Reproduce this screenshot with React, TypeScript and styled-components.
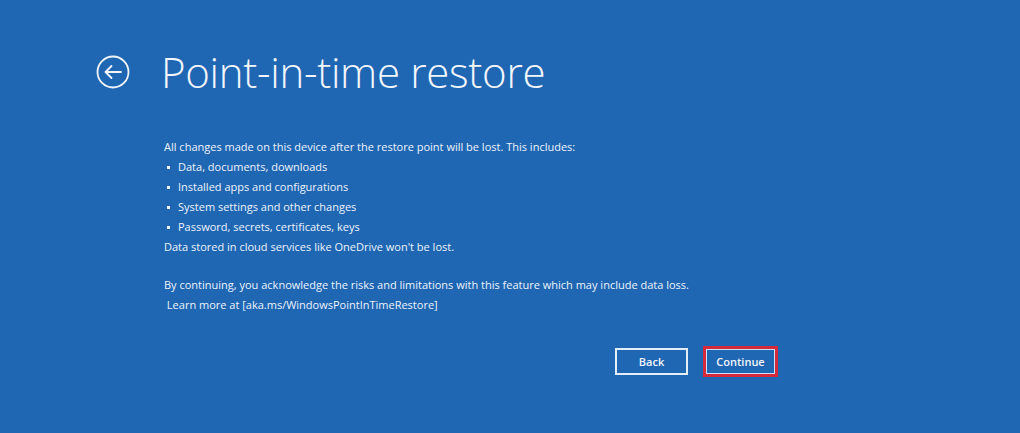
import React from "react";
import styled, { createGlobalStyle } from "styled-components";

const Global = createGlobalStyle`
  html, body { margin: 0; padding: 0; background: #1f66b3; }
  body { font-family: "Open Sans", "Noto Sans", sans-serif; color: #f2f6fb; }
`;

const Page = styled.div`
  width: 1020px;
  height: 433px;
  background: #1f66b3;
  box-sizing: border-box;
  padding: 48px 0 0 96px;
  display: flex;
  flex-direction: column;
`;

const Header = styled.div`
  display: flex;
  align-items: center;
  gap: 31px;
  height: 48px;
`;

const BackIcon = styled.button`
  width: 34px;
  height: 34px;
  padding: 0;
  border: none;
  background: none;
  display: flex;
  color: #f2f6fb;
`;

const Title = styled.h1`
  margin: 0;
  font-family: "Open Sans", sans-serif;
  font-weight: 300;
  font-size: 42px;
  line-height: 48px;
  letter-spacing: -0.3px;
  color: #f2f6fb;
`;

const Body = styled.div`
  margin: 41px 0 0 68px;
  font-size: 11px;
  line-height: 20px;
  color: #eef3fa;
`;

const Para = styled.p<{ $gap?: number }>`
  margin: 0 0 ${(p) => p.$gap ?? 0}px 0;
`;

const List = styled.ul`
  margin: 0;
  padding: 0;
  list-style: none;
`;

const Item = styled.li`
  display: flex;
  align-items: center;
  &::before {
    content: "";
    width: 3px;
    height: 3px;
    background: #eef3fa;
    margin: 0 8px 0 3px;
  }
`;

const Buttons = styled.div`
  display: flex;
  gap: 15px;
  margin: 31px 0 0 0;
  padding-left: 519px;
  align-items: center;
`;

const Button = styled.button<{ $focus?: boolean }>`
  box-sizing: border-box;
  width: ${(p) => (p.$focus ? 75 : 73)}px;
  height: ${(p) => (p.$focus ? 31 : 27)}px;
  background: #1f66b3;
  color: #f2f6fb;
  font-family: "Open Sans", sans-serif;
  font-weight: 600;
  font-size: 11px;
  border: ${(p) => (p.$focus ? "3px solid #d42a3c" : "2px solid #e4eef8")};
  box-shadow: ${(p) => (p.$focus ? "inset 0 0 0 1px #cfe0f2" : "none")};
  padding: 0;
  cursor: pointer;
`;

export default function App() {
  return (
    <>
      <Global />
      <Page>
        <Header>
          <BackIcon aria-label="Back">
            <svg width="34" height="34" viewBox="0 0 34 34" fill="none" stroke="currentColor" strokeWidth="1.8">
              <circle cx="17" cy="17" r="15.5" />
              <path d="M25 17H9.5M15.5 11l-6 6 6 6" strokeLinecap="round" strokeLinejoin="round" />
            </svg>
          </BackIcon>
          <Title>Point-in-time restore</Title>
        </Header>
        <Body>
          <Para>All changes made on this device after the restore point will be lost. This includes:</Para>
          <List>
            <Item>Data, documents, downloads</Item>
            <Item>Installed apps and configurations</Item>
            <Item>System settings and other changes</Item>
            <Item>Password, secrets, certificates, keys</Item>
          </List>
          <Para $gap={18}>Data stored in cloud services like OneDrive won't be lost.</Para>
          <Para>By continuing, you acknowledge the risks and limitations with this feature which may include data loss.</Para>
          <Para>&nbsp;Learn more at [aka.ms/WindowsPointInTimeRestore]</Para>
        </Body>
        <Buttons>
          <Button>Back</Button>
          <Button $focus>Continue</Button>
        </Buttons>
      </Page>
    </>
  );
}
